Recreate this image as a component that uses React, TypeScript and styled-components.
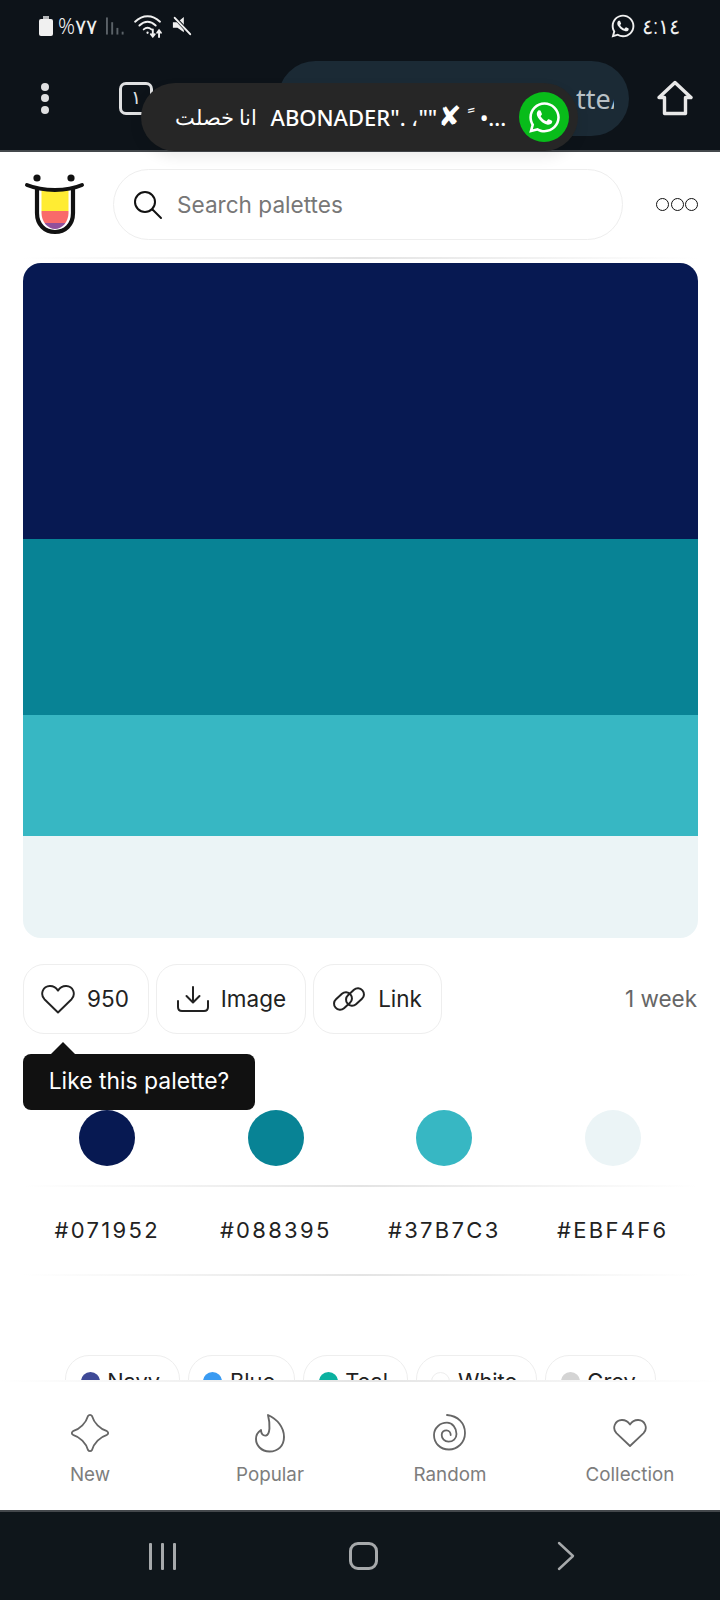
import React from 'react';
import { FaWhatsapp } from 'react-icons/fa';
import styled, { createGlobalStyle } from 'styled-components';

const GlobalStyle = createGlobalStyle`
  html, body {
    margin: 0;
    padding: 0;
    background: #fff;
  }
  * {
    box-sizing: border-box;
  }
`;

const swatches = [
  { hex: '#071952', height: 276 },
  { hex: '#088395', height: 176 },
  { hex: '#37B7C3', height: 121 },
  { hex: '#EBF4F6', height: 102 },
];

const tags = [
  { name: 'Navy', color: '#3f4a97' },
  { name: 'Blue', color: '#3a9bf2' },
  { name: 'Teal', color: '#0bb1a0' },
  { name: 'White', color: '#ffffff' },
  { name: 'Grey', color: '#d4d4d4' },
];

function HeartIcon() {
  return (
    <svg width="36" height="36" viewBox="0 0 36 36" fill="none" stroke="#222" strokeWidth="1.9" strokeLinejoin="round">
      <path d="M18 31.5 L4.4 18.2 C-0.2 13 3 5.2 9.8 5 C13 4.9 16 6.6 18 9.6 C20 6.6 23 4.9 26.2 5 C33 5.2 36.2 13 31.6 18.2 Z" />
    </svg>
  );
}

function NavHeartIcon() {
  return (
    <svg width="36" height="30" viewBox="0 0 36 30" fill="none" stroke="#666" strokeWidth="1.8" strokeLinejoin="round">
      <path d="M18 28 L4.4 15.2 C-0.2 10 3 2.2 9.8 2 C13 1.9 16 3.6 18 6.6 C20 3.6 23 1.9 26.2 2 C33 2.2 36.2 10 31.6 15.2 Z" />
    </svg>
  );
}

function DownloadIcon() {
  return (
    <svg width="34" height="28" viewBox="0 0 34 28" fill="none" stroke="#222" strokeWidth="2" strokeLinecap="round" strokeLinejoin="round">
      <path d="M17 2 V17 M10.5 11 L17 17.5 L23.5 11" />
      <path d="M2 16 V22 C2 24.5 3.5 26 6 26 H28 C30.5 26 32 24.5 32 22 V16" />
    </svg>
  );
}

function LinkIcon() {
  return (
    <svg width="36" height="28" viewBox="0 0 36 28" fill="none" stroke="#222" strokeWidth="2">
      <rect x="2" y="10" width="20" height="12" rx="6" transform="rotate(-42 12 16)" />
      <rect x="14" y="6" width="20" height="12" rx="6" transform="rotate(-42 24 12)" />
    </svg>
  );
}

function SearchIcon() {
  return (
    <svg width="30" height="30" viewBox="0 0 30 30" fill="none" stroke="#111" strokeWidth="2" strokeLinecap="round">
      <circle cx="12" cy="12" r="10" />
      <path d="M19.5 19.5 L28 28" />
    </svg>
  );
}

function Logo() {
  return (
    <svg width="62" height="68" viewBox="0 0 62 68" fill="none">
      <clipPath id="tongue">
        <path d="M18.5 17 H45.5 V42 C45.5 51 39 58 32 58 C25 58 18.5 51 18.5 42 Z" />
      </clipPath>
      <g clipPath="url(#tongue)">
        <rect x="18" y="17" width="28" height="23" fill="#ffec33" />
        <rect x="18" y="40" width="28" height="12" fill="#f96a6a" />
        <rect x="18" y="52" width="28" height="7" fill="#91509b" />
      </g>
      <circle cx="14" cy="7" r="3.6" fill="#111" />
      <circle cx="48" cy="7" r="3.6" fill="#111" />
      <path d="M14 18 V42 C14 54 22 61 32 61 C42 61 50 54 50 42 V18" stroke="#111" strokeWidth="4.2" />
      <path d="M4 14 C20 20.5 44 20.5 59 14" stroke="#111" strokeWidth="4" strokeLinecap="round" />
    </svg>
  );
}

function StarIcon() {
  return (
    <svg width="40" height="40" viewBox="0 0 40 40" fill="none" stroke="#666" strokeWidth="1.8" strokeLinejoin="round">
      <path d="M18 3 C19 1.4 21 1.4 22 3 C24 10 30 16 37 18.2 C38.6 19.2 38.6 20.8 37 21.8 C30 24 24 30 22 37 C21 38.6 19 38.6 18 37 C16 30 10 24 3 21.8 C1.4 20.8 1.4 19.2 3 18.2 C10 16 16 10 18 3 Z" />
    </svg>
  );
}

function FlameIcon() {
  return (
    <svg width="32" height="40" viewBox="0 0 32 40" fill="none" stroke="#666" strokeWidth="1.9" strokeLinejoin="round">
      <path d="M14 2 C23 6 30 14 30 24 C30 33 24 38.5 15.5 38.5 C7 38.5 2 32 2 26 C2 22 4 19 7 17 C7 21 9 23 12 22.5 C16 21.5 16.5 12 14 2 Z" />
    </svg>
  );
}

function SpiralIcon() {
  return (
    <svg width="36" height="40" viewBox="0 0 36 40" fill="none" stroke="#666" strokeWidth="1.8" strokeLinecap="round">
      <path d="M15 2 C26 3 33 10 33 20 C33 30 25 36.5 17 36.5 C8 36.5 2 30 2 22 C2 15 8 9.7 15 9.7 C20.5 9.7 24.5 15 24.5 21 C24.5 25.5 21 28.7 16.5 28.7 C12.5 28.7 9.7 25.5 9.7 22 C9.7 19 12 17.3 14.5 17.3 C17 17.3 18.7 19.5 18.7 22" />
    </svg>
  );
}

function WifiIcon() {
  return (
    <svg width="31" height="23" viewBox="0 0 32 24" fill="none" stroke="#f0f0f0" strokeWidth="2" strokeLinecap="round">
      <path d="M2 7 C10 -0.5 20 -0.5 28 7" />
      <path d="M6.5 11 C12 6 18 6 23.5 11" />
      <path d="M11 15 C13.5 12.8 16.5 12.8 19 15" />
      <circle cx="15" cy="18.5" r="1.2" fill="#f0f0f0" stroke="none" />
      <path d="M20.5 15 V22 M18.5 20 L20.5 22.5 L22.5 20" />
      <path d="M27 23 V16.5 M25 18.5 L27 16 L29 18.5" />
    </svg>
  );
}

function MuteIcon() {
  return (
    <svg width="20" height="20" viewBox="0 0 22 22" fill="none">
      <path d="M1 7 H6 L13 1 V18 L6 13 H1 Z" fill="#f0f0f0" />
      <path d="M3 1.5 L20.5 20.5" stroke="#0d1319" strokeWidth="4" />
      <path d="M3 2 L20 20" stroke="#f0f0f0" strokeWidth="2.2" strokeLinecap="round" />
    </svg>
  );
}

function SignalIcon() {
  return (
    <svg width="19" height="20" viewBox="0 0 20 20" fill="#5b6268">
      <rect x="0" y="1" width="2" height="18" />
      <rect x="5.5" y="6" width="2" height="13" />
      <rect x="11" y="12" width="2" height="7" />
      <rect x="16.5" y="16" width="2" height="3" />
    </svg>
  );
}

function HomeIcon() {
  return (
    <svg width="36" height="36" viewBox="0 0 36 36" fill="none" stroke="#e8e8e8" strokeWidth="3.4" strokeLinejoin="round" strokeLinecap="round">
      <path d="M2 17.5 L18 2.5 L34 17.5 H28.5 V33.5 H7.5 V17.5 Z" />
    </svg>
  );
}

export default function App() {
  return (
    <Page>
      <GlobalStyle />
      <Chrome>
        <StatusBar>
          <StatusGroup>
            <Battery />
            <StatusText>%٧٧</StatusText>
            <SignalIcon />
            <WifiIcon />
            <MuteIcon />
          </StatusGroup>
          <StatusGroup>
            <FaWhatsapp size={26} color="#f0f0f0" />
            <TimeText>٤:١٤</TimeText>
          </StatusGroup>
        </StatusBar>
        <Toolbar>
          <MenuDots>
            <span />
            <span />
            <span />
          </MenuDots>
          <TabCount>١</TabCount>
          <UrlPill>
            <UrlText>tte/</UrlText>
          </UrlPill>
          <HomeSlot>
            <HomeIcon />
          </HomeSlot>
        </Toolbar>
        <Toast>
          <ToastArabic>انا خصلت</ToastArabic>
          <ToastLatin dir="ltr">
            ABONADER". ،""<ToastMark>✘</ToastMark>ﹰ •...
          </ToastLatin>
          <ToastBadge>
            <FaWhatsapp size={35} color="#fff" />
          </ToastBadge>
        </Toast>
      </Chrome>
      <Main>
        <Header>
          <Logo />
          <SearchBox>
            <SearchIcon />
            <SearchLabel>Search palettes</SearchLabel>
          </SearchBox>
          <MoreDots>
            <span />
            <span />
            <span />
          </MoreDots>
        </Header>
        <FadeLine />
        <Palette>
          {swatches.map((s) => (
            <PaletteBand key={s.hex} $color={s.hex} $height={s.height} />
          ))}
        </Palette>
        <Actions>
          <ActionButton $lead={16}>
            <HeartIcon />
            950
          </ActionButton>
          <ActionButton $lead={19}>
            <DownloadIcon />
            Image
          </ActionButton>
          <ActionButton $lead={17}>
            <LinkIcon />
            Link
          </ActionButton>
          <Age>1 week</Age>
          <Tooltip>Like this palette?</Tooltip>
        </Actions>
        <SwatchRow>
          {swatches.map((s) => (
            <SwatchCell key={s.hex}>
              <Dot $color={s.hex} />
            </SwatchCell>
          ))}
        </SwatchRow>
        <FadeLine />
        <HexRow>
          {swatches.map((s) => (
            <HexLabel key={s.hex}>{s.hex}</HexLabel>
          ))}
        </HexRow>
        <FadeLine />
        <TagRow>
          {tags.map((t) => (
            <Tag key={t.name}>
              <TagDot $color={t.color} />
              {t.name}
            </Tag>
          ))}
        </TagRow>
      </Main>
      <BottomNav>
        <FadeLine />
        <NavGrid>
          <NavItem>
            <NavIcon>
              <StarIcon />
            </NavIcon>
            New
          </NavItem>
          <NavItem>
            <NavIcon>
              <FlameIcon />
            </NavIcon>
            Popular
          </NavItem>
          <NavItem>
            <NavIcon>
              <SpiralIcon />
            </NavIcon>
            Random
          </NavItem>
          <NavItem>
            <NavIcon>
              <NavHeartIcon />
            </NavIcon>
            Collection
          </NavItem>
        </NavGrid>
      </BottomNav>
      <SystemBar>
        <RecentsIcon>
          <span />
          <span />
          <span />
        </RecentsIcon>
        <HomeButton />
        <BackSlot>
          <svg width="18" height="30" viewBox="0 0 18 30" fill="none" stroke="#a6a9ab" strokeWidth="2.4" strokeLinecap="round" strokeLinejoin="round">
            <path d="M2 2 L16 15 L2 28" />
          </svg>
        </BackSlot>
      </SystemBar>
    </Page>
  );
}

const Page = styled.div`
  position: relative;
  width: 720px;
  height: 1600px;
  display: flex;
  flex-direction: column;
  overflow: hidden;
  background: #fff;
  font-family: Inter, 'Noto Sans', sans-serif;
`;

const Chrome = styled.div`
  position: relative;
  height: 152px;
  flex-shrink: 0;
  background: #0d1319;
  border-bottom: 2px solid #44484c;
  z-index: 2;
`;

const StatusBar = styled.div`
  height: 50px;
  padding: 2px 40px 0 39px;
  display: flex;
  align-items: center;
  justify-content: space-between;
`;

const StatusGroup = styled.div`
  display: flex;
  align-items: center;
  gap: 8px;
`;

const Battery = styled.div`
  position: relative;
  width: 14px;
  height: 17px;
  margin-top: 3px;
  border-radius: 2px;
  background: #f0f0f0;

  &::before {
    content: '';
    position: absolute;
    top: -3px;
    left: 4px;
    width: 6px;
    height: 3px;
    background: #b5b7b9;
  }
`;

const StatusText = styled.span`
  margin: 0 1px 0 -3px;
  color: #f0f0f0;
  font-family: 'Noto Sans', Roboto, sans-serif;
  font-size: 21px;
  font-weight: 300;
  line-height: 24px;
`;

const TimeText = styled.span`
  margin-left: -2px;
  color: #f0f0f0;
  font-family: 'Noto Sans', Roboto, sans-serif;
  font-size: 21px;
  font-weight: 300;
  line-height: 24px;
`;

const Toolbar = styled.div`
  position: relative;
  height: 100px;
  padding: 0 27px 0 41px;
  margin-top: -2px;
  display: flex;
  align-items: center;
`;

const MenuDots = styled.div`
  display: flex;
  flex-direction: column;
  gap: 3.5px;

  span {
    display: block;
    width: 8px;
    height: 8px;
    border-radius: 50%;
    background: #dfe0e1;
  }
`;

const TabCount = styled.div`
  width: 34px;
  height: 33px;
  margin-left: 70px;
  border: 3px solid #dfe0e1;
  border-radius: 7px;
  color: #dfe0e1;
  font-family: 'Noto Sans', sans-serif;
  font-size: 19px;
  line-height: 25px;
  text-align: center;
`;

const UrlPill = styled.div`
  width: 351px;
  height: 75px;
  margin-left: 125px;
  padding-right: 15px;
  border-radius: 38px;
  background: #1b2a35;
  display: flex;
  align-items: center;
  justify-content: flex-end;
`;

const UrlText = styled.span`
  width: 38px;
  overflow: hidden;
  white-space: nowrap;
  color: #b9c1c6;
  font-family: 'Noto Sans', sans-serif;
  font-size: 27px;
`;

const HomeSlot = styled.div`
  margin-left: auto;
  display: flex;
`;

const Toast = styled.div`
  position: absolute;
  top: 83px;
  left: 141px;
  width: 437px;
  height: 68px;
  padding: 0 9px 0 34px;
  border-radius: 34px;
  background: #262626;
  color: #fff;
  display: flex;
  align-items: center;
  font-family: 'Noto Sans', Roboto, sans-serif;
  box-shadow: 0 6px 14px rgba(0, 0, 0, 0.08);
`;

const ToastArabic = styled.span`
  font-size: 21px;
  font-weight: 400;
  white-space: nowrap;
`;

const ToastLatin = styled.span`
  flex: 1;
  margin-left: 13px;
  font-family: 'Noto Sans', Roboto, sans-serif;
  font-size: 22px;
  font-weight: 500;
  white-space: nowrap;
  overflow: hidden;
`;

const ToastMark = styled.span`
  margin: 0 7px 0 1px;
  font-size: 28px;
  line-height: 20px;
`;

const ToastBadge = styled.div`
  width: 50px;
  height: 50px;
  flex-shrink: 0;
  border-radius: 50%;
  background: #08bc1a;
  display: flex;
  align-items: center;
  justify-content: center;
`;

const Main = styled.div`
  flex: 1;
  min-height: 0;
  padding: 0 22px 0 23px;
  overflow: hidden;
`;

const Header = styled.div`
  height: 105px;
  display: flex;
  align-items: center;
`;

const SearchBox = styled.div`
  width: 510px;
  height: 71px;
  margin-left: 28px;
  padding-left: 19px;
  border: 1.5px solid #eee;
  border-radius: 36px;
  display: flex;
  align-items: center;
  gap: 14px;
`;

const SearchLabel = styled.span`
  padding-bottom: 1px;
  color: #777;
  font-size: 22.6px;
`;

const MoreDots = styled.div`
  display: flex;
  gap: 1.5px;
  margin-left: auto;

  span {
    display: block;
    width: 13px;
    height: 13px;
    border: 1.7px solid #111;
    border-radius: 50%;
  }
`;

const FadeLine = styled.div`
  height: 2px;
  flex-shrink: 0;
  background: linear-gradient(90deg, rgba(225, 225, 225, 0), #e4e4e4 50%, rgba(225, 225, 225, 0));
`;

const Palette = styled.div`
  margin-top: 4px;
  border-radius: 18px;
  overflow: hidden;
`;

const PaletteBand = styled.div<{ $color: string; $height: number }>`
  height: ${({ $height }) => $height}px;
  background: ${({ $color }) => $color};
`;

const Actions = styled.div`
  position: relative;
  margin-top: 26px;
  display: flex;
  align-items: center;
  gap: 7px;
`;

const ActionButton = styled.div<{ $lead: number }>`
  height: 70px;
  padding: 0 19px 1px ${({ $lead }) => $lead}px;
  border: 1.5px solid #eee;
  border-radius: 21px;
  display: flex;
  align-items: center;
  gap: 11px;
  color: #222;
  font-size: 22.5px;
`;

const Age = styled.span`
  margin-left: auto;
  margin-right: 1px;
  padding-bottom: 1px;
  color: #666;
  font-size: 22.5px;
`;

const Tooltip = styled.div`
  position: absolute;
  top: 90px;
  left: 0;
  width: 232px;
  height: 56px;
  border-radius: 8px;
  background: #111;
  color: #fff;
  font-size: 22.9px;
  line-height: 54px;
  text-align: center;
  z-index: 1;

  &::before {
    content: '';
    position: absolute;
    top: -12px;
    left: 28px;
    border-left: 12px solid transparent;
    border-right: 12px solid transparent;
    border-bottom: 12px solid #111;
  }
`;

const SwatchRow = styled.div`
  margin-top: 76px;
  padding-bottom: 19px;
  display: grid;
  grid-template-columns: repeat(4, 168.5px);
`;

const SwatchCell = styled.div`
  display: flex;
  justify-content: center;
`;

const Dot = styled.div<{ $color: string }>`
  width: 56px;
  height: 56px;
  border-radius: 50%;
  background: ${({ $color }) => $color};
`;

const HexRow = styled.div`
  height: 87px;
  padding-bottom: 2px;
  display: grid;
  grid-template-columns: repeat(4, 168.5px);
  align-items: center;
`;

const HexLabel = styled.span`
  color: #222;
  font-size: 22px;
  letter-spacing: 2.3px;
  text-align: center;
`;

const TagRow = styled.div`
  margin-top: 79px;
  display: flex;
  justify-content: center;
  gap: 8px;
`;

const Tag = styled.div`
  height: 52px;
  padding: 0 19px 0 14.5px;
  border: 1.5px solid #eee;
  border-radius: 24px;
  display: flex;
  align-items: center;
  gap: 7.5px;
  color: #222;
  font-size: 21.8px;
`;

const TagDot = styled.span<{ $color: string }>`
  width: 19px;
  height: 19px;
  border-radius: 50%;
  background: ${({ $color }) => $color};
  border: ${({ $color }) => ($color === '#ffffff' ? '1px solid #eee' : 'none')};
`;

const BottomNav = styled.div`
  height: 132px;
  flex-shrink: 0;
  display: flex;
  flex-direction: column;
  background: #fff;
  border-bottom: 2px solid #44484c;
`;

const NavGrid = styled.div`
  display: grid;
  grid-template-columns: repeat(4, 180px);
`;

const NavItem = styled.div`
  padding-top: 31px;
  display: flex;
  flex-direction: column;
  align-items: center;
  color: #7d7d7d;
  font-size: 18.8px;
`;

const NavIcon = styled.div`
  height: 40px;
  margin-bottom: 10px;
  display: flex;
  align-items: center;
  justify-content: center;
`;

const SystemBar = styled.div`
  height: 88px;
  flex-shrink: 0;
  padding-left: 149px;
  background: #0f161b;
  display: flex;
  align-items: center;
`;

const RecentsIcon = styled.div`
  display: flex;
  gap: 9px;

  span {
    display: block;
    width: 3px;
    height: 27px;
    border-radius: 1px;
    background: #a6a9ab;
  }
`;

const HomeButton = styled.div`
  width: 29px;
  height: 28px;
  margin-left: 173px;
  border: 3px solid #a6a9ab;
  border-radius: 9px;
`;

const BackSlot = styled.div`
  margin-left: 179px;
  display: flex;
`;
